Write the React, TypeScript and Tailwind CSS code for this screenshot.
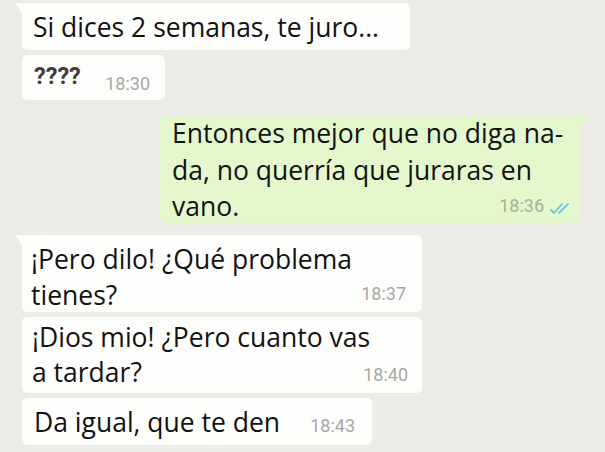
import React from 'react';

const textFont = { fontFamily: '"Open Sans", "Noto Sans", sans-serif' };
const timeFont = { fontFamily: 'Roboto, "Liberation Sans", sans-serif' };

const Time: React.FC<{ t: string; className?: string }> = ({ t, className = '' }) => (
  <span className={`text-[18px] leading-none whitespace-nowrap ${className}`} style={timeFont}>
    {t}
  </span>
);

const TailLeft = () => (
  <svg className="absolute -left-[7px] top-0" width="8" height="12" viewBox="0 0 8 12">
    <path d="M0 0 H8 V12 Z" fill="#fdfdfc" />
  </svg>
);

const TailRight = () => (
  <svg className="absolute -right-[10px] top-0" width="11" height="12" viewBox="0 0 11 12">
    <path d="M0 0 H11 L0 12 Z" fill="#e4f7cd" />
  </svg>
);

const Ticks = () => (
  <svg width="20" height="11" viewBox="0 0 20 11" className="ml-[6px] mb-[1px]">
    <path d="M1 7 L4 10 L12 1 M9 10 L18 1" stroke="#6fc3dc" strokeWidth="1.8" fill="none" strokeLinecap="round" />
  </svg>
);

export default function App() {
  return (
    <div className="w-[605px] h-[452px] overflow-hidden bg-[#edebe5] text-[#121212]" style={textFont}>
      <div className="flex flex-col pt-[3px] text-[26.5px] leading-[36px]">
        {/* first incoming group */}
        <div className="relative ml-[22px] w-[388px] h-[47px] bg-[#fdfdfc] rounded-[5px] rounded-tl-none pl-[11px] pt-[6px]">
          <TailLeft />
          <div className="whitespace-nowrap">Si dices 2 semanas, te juro...</div>
        </div>
        <div className="ml-[22px] mt-[5px] w-[143px] h-[45px] bg-[#fdfdfc] rounded-[5px] pl-[12px] pr-[15px] pt-[10px] flex items-start justify-between">
          <span className="text-[23.5px] leading-none font-bold text-[#3d3d3d]" style={timeFont}>????</span>
          <Time t="18:30" className="mt-[10px] text-[#a8a8a6]" />
        </div>

        {/* outgoing */}
        <div className="relative ml-[160px] mt-[15px] w-[420px] h-[108px] bg-[#e4f7cd] rounded-[5px] rounded-tr-none pl-[12px] pr-[10px] leading-[36.5px]">
          <TailRight />
          <div className="whitespace-nowrap">Entonces mejor que no diga na-</div>
          <div className="whitespace-nowrap">da, no querría que juraras en</div>
          <div className="flex items-end justify-between">
            <span>vano.</span>
            <div className="flex items-end mb-[10px]">
              <Time t="18:36" className="text-[#a2b59a]" />
              <Ticks />
            </div>
          </div>
        </div>

        {/* second incoming group */}
        <div className="relative ml-[22px] mt-[12px] w-[400px] h-[77px] bg-[#fdfdfc] rounded-[5px] rounded-tl-none pl-[9px] pr-[16px] pt-[6px]">
          <TailLeft />
          <div className="whitespace-nowrap">¡Pero dilo! ¿Qué problema</div>
          <div className="flex items-end justify-between">
            <span>tienes?</span>
            <Time t="18:37" className="mb-[10px] text-[#a8a8a6]" />
          </div>
        </div>
        <div className="ml-[22px] mt-[5px] w-[400px] h-[76px] bg-[#fdfdfc] rounded-[5px] pl-[10px] pr-[14px] pt-[3px] leading-[35px]">
          <div className="whitespace-nowrap">¡Dios mio! ¿Pero cuanto vas</div>
          <div className="flex items-end justify-between">
            <span>a tardar?</span>
            <Time t="18:40" className="mb-[6px] text-[#a8a8a6]" />
          </div>
        </div>
        <div className="ml-[22px] mt-[5px] w-[350px] h-[47px] bg-[#fdfdfc] rounded-[5px] pl-[12px] pr-[17px] pt-[6px] flex items-start justify-between">
          <span className="whitespace-nowrap">Da igual, que te den</span>
          <Time t="18:43" className="mt-[13px] text-[#a8a8a6]" />
        </div>
      </div>
    </div>
  );
}
